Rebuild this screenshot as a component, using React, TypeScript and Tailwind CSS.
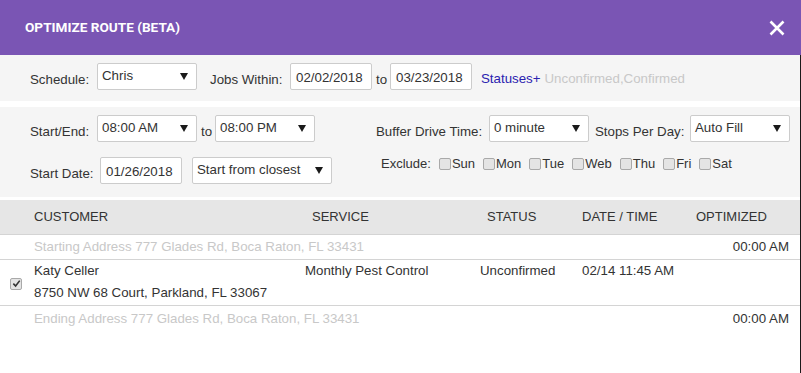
import React from "react";

const Arrow = () => (
  <svg width="8" height="7" viewBox="0 0 8 7">
    <path d="M0 0 H8 L4 7 Z" fill="#1a1a1a" />
  </svg>
);

function Select({ value, w, className = "" }: { value: string; w: string; className?: string }) {
  return (
    <div className={`${w} h-[27px] bg-white border border-[#cccccc] rounded-[2px] flex items-start justify-between pl-[4px] pr-[8px] pt-[4px] ${className}`}>
      <span className="text-[13.3px] text-[#333] leading-[16px]">{value}</span>
      <span className="pt-[5px] flex"><Arrow /></span>
    </div>
  );
}

function Input({ value, w, className = "" }: { value: string; w: string; className?: string }) {
  return (
    <div className={`${w} h-[27px] bg-white border border-[#cccccc] rounded-[2px] pl-[5px] pt-[4px] ${className}`}>
      <span className="text-[13.3px] text-[#333] leading-[16px]">{value}</span>
    </div>
  );
}

function Box({ checked = false }: { checked?: boolean }) {
  return (
    <span className="inline-flex w-[12px] h-[12px] border border-[#a9a9a9] rounded-[2px] bg-[#e4e4e4] items-center justify-center">
      {checked && (
        <svg width="9" height="9" viewBox="0 0 10 10">
          <path d="M1.5 5.2 L4 7.8 L8.6 1.8" stroke="#333" strokeWidth="1.8" fill="none" />
        </svg>
      )}
    </span>
  );
}

export default function App() {
  const days = ["Sun", "Mon", "Tue", "Web", "Thu", "Fri", "Sat"];
  const lbl = "pt-[9px] leading-[16px]";
  return (
    <div className="w-[801px] h-[373px] bg-white overflow-hidden text-[13.3px] text-[#333]" style={{ fontFamily: '"Liberation Sans", Arial, sans-serif' }}>
      <div className="h-[55px] bg-[#7a55b4] flex items-center justify-between pl-[25px] pr-[16px]">
        <span className="text-white text-[13.6px] font-bold" style={{ fontFamily: "Roboto, sans-serif" }}>OPTIMIZE ROUTE (BETA)</span>
        <svg width="16" height="16" viewBox="0 0 16 16">
          <path d="M1.5 1.5 L14.5 14.5 M14.5 1.5 L1.5 14.5" stroke="white" strokeWidth="2.6" />
        </svg>
      </div>
      <div className="border-r border-[#1a1a1a] h-[318px]">
        <div className="h-[46px] bg-[#f5f5f5] flex items-start pt-[8px] pl-[30px]">
          <span className={`${lbl} w-[67px]`}>Schedule:</span>
          <Select value="Chris" w="w-[100px]" />
          <span className={`${lbl} ml-[13px] w-[80px]`}>Jobs Within:</span>
          <Input value="02/02/2018" w="w-[82px]" />
          <span className={`${lbl} ml-[4px] w-[14px]`}>to</span>
          <Input value="03/23/2018" w="w-[82px]" />
          <span className="pt-[8px] leading-[16px] ml-[9px] text-[#2a22b0]">Statuses+</span>
          <span className="pt-[8px] leading-[16px] ml-[4px] text-[#c8c8c8]">Unconfirmed,Confirmed</span>
        </div>
        <div className="h-[6px] bg-white" />
        <div className="h-[90px] bg-[#f5f5f5] flex pl-[30px] pt-[8px]">
          <div className="w-[346px] flex flex-col gap-[15px]">
            <div className="flex items-start h-[27px]">
              <span className={`${lbl} w-[67px]`}>Start/End:</span>
              <Select value="08:00 AM" w="w-[100px]" />
              <span className={`${lbl} ml-[4px] w-[14px]`}>to</span>
              <Select value="08:00 PM" w="w-[100px]" />
            </div>
            <div className="flex items-start h-[27px]">
              <span className={`${lbl} w-[70px]`}>Start Date:</span>
              <Input value="01/26/2018" w="w-[82px]" />
              <Select value="Start from closest" w="w-[140px]" className="ml-[10px]" />
            </div>
          </div>
          <div className="flex flex-col">
            <div className="flex items-start h-[27px]">
              <span className={`${lbl} w-[113px]`}>Buffer Drive Time:</span>
              <Select value="0 minute" w="w-[100px]" />
              <span className={`${lbl} ml-[6px] w-[95px]`}>Stops Per Day:</span>
              <Select value="Auto Fill" w="w-[100px]" />
            </div>
            <div className="flex items-center pl-[5px] mt-[14px] leading-[16px] text-[13px]">
              <span className="mr-[8px]">Exclude:</span>
              {days.map((d) => (
                <span key={d} className="flex items-center mr-[8px]">
                  <Box />
                  <span className="ml-[1px]">{d}</span>
                </span>
              ))}
            </div>
          </div>
        </div>
        <div className="h-[3px] bg-white" />
        <div className="grid grid-cols-[34px_271px_175px_102px_114px_1fr] text-[13px]">
          <div className="h-[35px] bg-[#e6e6e6] border-b border-[#d4d4d4]" />
          <div className="h-[35px] bg-[#e6e6e6] border-b border-[#d4d4d4] flex items-center">CUSTOMER</div>
          <div className="h-[35px] bg-[#e6e6e6] border-b border-[#d4d4d4] flex items-center pl-[7px]">SERVICE</div>
          <div className="h-[35px] bg-[#e6e6e6] border-b border-[#d4d4d4] flex items-center pl-[7px]">STATUS</div>
          <div className="h-[35px] bg-[#e6e6e6] border-b border-[#d4d4d4] flex items-center">DATE / TIME</div>
          <div className="h-[35px] bg-[#e6e6e6] border-b border-[#d4d4d4] flex items-center">OPTIMIZED</div>
        </div>
        <div className="text-[13.3px]">
          <div className="h-[25px] border-b border-[#d4d4d4] flex items-center justify-between pl-[34px] pr-[11px]">
            <span className="text-[#c8c8c8]">Starting Address 777 Glades Rd, Boca Raton, FL 33431</span>
            <span>00:00 AM</span>
          </div>
          <div className="h-[46px] border-b border-[#d4d4d4] grid grid-cols-[34px_271px_175px_102px_114px_1fr]">
            <div className="flex items-center pl-[10px] pt-[2px]"><Box checked /></div>
            <div className="flex flex-col pt-[3px]">
              <span className="leading-[16px]">Katy Celler</span>
              <span className="leading-[16px] mt-[6px]">8750 NW 68 Court, Parkland, FL 33067</span>
            </div>
            <div className="pt-[3px] leading-[16px]">Monthly Pest Control</div>
            <div className="pt-[3px] leading-[16px]">Unconfirmed</div>
            <div className="pt-[3px] leading-[16px]">02/14 11:45 AM</div>
            <div />
          </div>
          <div className="h-[25px] flex items-center justify-between pl-[34px] pr-[11px]">
            <span className="text-[#c8c8c8]">Ending Address 777 Glades Rd, Boca Raton, FL 33431</span>
            <span>00:00 AM</span>
          </div>
        </div>
      </div>
    </div>
  );
}
